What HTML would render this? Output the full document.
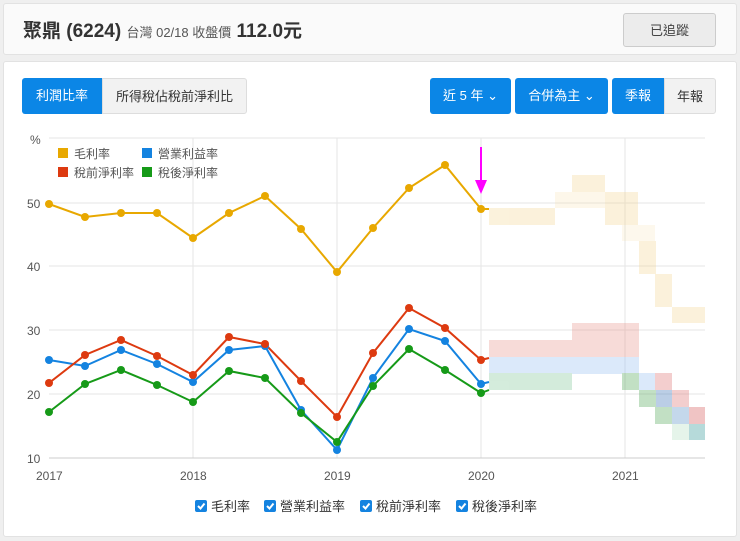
<!DOCTYPE html>
<html><head><meta charset="utf-8"><style>
body{margin:0;width:740px;height:541px;background:#efefef;font-family:"Liberation Sans","Noto Sans CJK TC",sans-serif;position:relative;overflow:hidden}
.card{position:absolute;background:#fff;border:1px solid #e2e2e2;border-radius:3px}
.btn{position:absolute;height:36px;line-height:36px;font-size:13px;text-align:center;box-sizing:border-box}
.b{background:#0b86e6;color:#fff;border-radius:3px}
.g{background:#f2f2f2;color:#333;border:1px solid #ddd}
</style></head><body>
<div class="card" style="left:3px;top:3px;width:732px;height:50px;background:#fafafa"></div>
<div style="position:absolute;left:23px;top:16px;font-size:19px;color:#333;font-weight:bold;white-space:nowrap">聚鼎 (6224) <span style="font-size:13px;font-weight:normal;color:#555">台灣 02/18 收盤價</span> 112.0元</div>
<div class="btn" style="left:623px;top:13px;width:93px;height:34px;line-height:34px;background:#ececec;border:1px solid #ccc;border-radius:3px;color:#444">已追蹤</div>
<div class="card" style="left:3px;top:61px;width:732px;height:474px"></div>
<div class="btn b" style="left:22px;top:78px;width:80px;border-radius:3px 0 0 3px">利潤比率</div>
<div class="btn g" style="left:102px;top:78px;width:145px;border-radius:0 3px 3px 0">所得稅佔稅前淨利比</div>
<div class="btn b" style="left:430px;top:78px;width:81px">近 5 年 ⌄</div>
<div class="btn b" style="left:515px;top:78px;width:93px">合併為主 ⌄</div>
<div class="btn b" style="left:612px;top:78px;width:52px;border-radius:3px 0 0 3px">季報</div>
<div class="btn g" style="left:664px;top:78px;width:52px;border-radius:0 3px 3px 0">年報</div>
<svg style="position:absolute;left:0;top:0" width="740" height="541" font-family="Liberation Sans,Noto Sans CJK TC,sans-serif">
<g stroke="#e6e6e6" stroke-width="1">
<line x1="49" y1="138" x2="705" y2="138"/><line x1="49" y1="203" x2="705" y2="203"/><line x1="49" y1="266" x2="705" y2="266"/><line x1="49" y1="330" x2="705" y2="330"/><line x1="49" y1="394" x2="705" y2="394"/>
<line x1="193" y1="138" x2="193" y2="458"/><line x1="337" y1="138" x2="337" y2="458"/><line x1="481" y1="138" x2="481" y2="458"/><line x1="625" y1="138" x2="625" y2="458"/>
</g>
<line x1="49" y1="458" x2="705" y2="458" stroke="#ccc"/>
<g font-size="12" fill="#555"><text x="30" y="144">%</text><text x="27" y="208">50</text><text x="27" y="271">40</text><text x="27" y="335">30</text><text x="27" y="399">20</text><text x="27" y="463">10</text>
<text x="36" y="480">2017</text><text x="180" y="480">2018</text><text x="324" y="480">2019</text><text x="468" y="480">2020</text><text x="612" y="480">2021</text></g>
<g font-size="12" fill="#555">
<rect x="58" y="148" width="10" height="10" fill="#e8a800"/><text x="74" y="158">毛利率</text>
<rect x="142" y="148" width="10" height="10" fill="#1483e0"/><text x="158" y="158">營業利益率</text>
<rect x="58" y="167" width="10" height="10" fill="#dd3a10"/><text x="74" y="177">稅前淨利率</text>
<rect x="142" y="167" width="10" height="10" fill="#169a18"/><text x="158" y="177">稅後淨利率</text></g>
<g opacity="0.3">
<rect x="489" y="208" width="66" height="17" fill="#f3d48c"/><rect x="555" y="192" width="50" height="16" fill="#f3d48c" opacity=".6"/><rect x="572" y="175" width="33" height="17" fill="#f3d48c"/><rect x="605" y="192" width="33" height="33" fill="#f3d48c"/><rect x="622" y="225" width="33" height="16" fill="#f3d48c" opacity=".5"/><rect x="639" y="241" width="17" height="33" fill="#f3d48c"/><rect x="655" y="274" width="17" height="33" fill="#f3d48c"/><rect x="672" y="307" width="33" height="16" fill="#f3d48c"/>
<rect x="489" y="340" width="150" height="17" fill="#e88a80"/><rect x="572" y="323" width="67" height="17" fill="#e88a80"/><rect x="489" y="357" width="150" height="17" fill="#8ab8f0"/><rect x="489" y="373" width="83" height="17" fill="#6fc08a"/><rect x="622" y="373" width="17" height="17" fill="#3a9a40"/><rect x="639" y="373" width="17" height="17" fill="#8ab8f0"/><rect x="655" y="373" width="17" height="17" fill="#d86060"/><rect x="655" y="390" width="17" height="17" fill="#2060b0"/><rect x="639" y="390" width="17" height="17" fill="#3a9a40"/><rect x="672" y="390" width="17" height="17" fill="#d86060"/><rect x="655" y="407" width="17" height="17" fill="#3a9a40"/><rect x="672" y="407" width="17" height="17" fill="#4080c0"/><rect x="689" y="407" width="16" height="17" fill="#d04040"/><rect x="689" y="424" width="16" height="16" fill="#108888"/><rect x="672" y="424" width="17" height="16" fill="#6fc08a" opacity=".6"/>
</g>
<g fill="none" stroke-width="2">
<polyline stroke="#e8a800" points="49,204 85,217 121,213 157,213 193,238 229,213 265,196 301,229 337,272 373,228 409,188 445,165 481,209 489,209"/>
<polyline stroke="#1483e0" points="49,360 85,366 121,350 157,364 193,382 229,350 265,346 301,410 337,450 373,378 409,329 445,341 481,384 489,382"/>
<polyline stroke="#dd3a10" points="49,383 85,355 121,340 157,356 193,375 229,337 265,344 301,381 337,417 373,353 409,308 445,328 481,360 489,358"/>
<polyline stroke="#169a18" points="49,412 85,384 121,370 157,385 193,402 229,371 265,378 301,413 337,442 373,386 409,349 445,370 481,393 489,390"/>
</g>
<g fill="#e8a800"><circle cx="49" cy="204" r="4"/><circle cx="85" cy="217" r="4"/><circle cx="121" cy="213" r="4"/><circle cx="157" cy="213" r="4"/><circle cx="193" cy="238" r="4"/><circle cx="229" cy="213" r="4"/><circle cx="265" cy="196" r="4"/><circle cx="301" cy="229" r="4"/><circle cx="337" cy="272" r="4"/><circle cx="373" cy="228" r="4"/><circle cx="409" cy="188" r="4"/><circle cx="445" cy="165" r="4"/><circle cx="481" cy="209" r="4"/></g>
<g fill="#1483e0"><circle cx="49" cy="360" r="4"/><circle cx="85" cy="366" r="4"/><circle cx="121" cy="350" r="4"/><circle cx="157" cy="364" r="4"/><circle cx="193" cy="382" r="4"/><circle cx="229" cy="350" r="4"/><circle cx="265" cy="346" r="4"/><circle cx="301" cy="410" r="4"/><circle cx="337" cy="450" r="4"/><circle cx="373" cy="378" r="4"/><circle cx="409" cy="329" r="4"/><circle cx="445" cy="341" r="4"/><circle cx="481" cy="384" r="4"/></g>
<g fill="#dd3a10"><circle cx="49" cy="383" r="4"/><circle cx="85" cy="355" r="4"/><circle cx="121" cy="340" r="4"/><circle cx="157" cy="356" r="4"/><circle cx="193" cy="375" r="4"/><circle cx="229" cy="337" r="4"/><circle cx="265" cy="344" r="4"/><circle cx="301" cy="381" r="4"/><circle cx="337" cy="417" r="4"/><circle cx="373" cy="353" r="4"/><circle cx="409" cy="308" r="4"/><circle cx="445" cy="328" r="4"/><circle cx="481" cy="360" r="4"/></g>
<g fill="#169a18"><circle cx="49" cy="412" r="4"/><circle cx="85" cy="384" r="4"/><circle cx="121" cy="370" r="4"/><circle cx="157" cy="385" r="4"/><circle cx="193" cy="402" r="4"/><circle cx="229" cy="371" r="4"/><circle cx="265" cy="378" r="4"/><circle cx="301" cy="413" r="4"/><circle cx="337" cy="442" r="4"/><circle cx="373" cy="386" r="4"/><circle cx="409" cy="349" r="4"/><circle cx="445" cy="370" r="4"/><circle cx="481" cy="393" r="4"/></g>
<line x1="481" y1="147" x2="481" y2="184" stroke="#f0f" stroke-width="2"/><polygon points="475,180 487,180 481,194" fill="#f0f"/>
<g font-size="13" fill="#333">
<rect x="195" y="500" width="12" height="12" rx="2" fill="#1483e0"/><path d="M198 506l2.5 2.5 4-5" stroke="#fff" stroke-width="2" fill="none"/><text x="211" y="511">毛利率</text>
<rect x="264" y="500" width="12" height="12" rx="2" fill="#1483e0"/><path d="M267 506l2.5 2.5 4-5" stroke="#fff" stroke-width="2" fill="none"/><text x="280" y="511">營業利益率</text>
<rect x="360" y="500" width="12" height="12" rx="2" fill="#1483e0"/><path d="M363 506l2.5 2.5 4-5" stroke="#fff" stroke-width="2" fill="none"/><text x="376" y="511">稅前淨利率</text>
<rect x="456" y="500" width="12" height="12" rx="2" fill="#1483e0"/><path d="M459 506l2.5 2.5 4-5" stroke="#fff" stroke-width="2" fill="none"/><text x="472" y="511">稅後淨利率</text>
</g>
</svg>
</body></html>
